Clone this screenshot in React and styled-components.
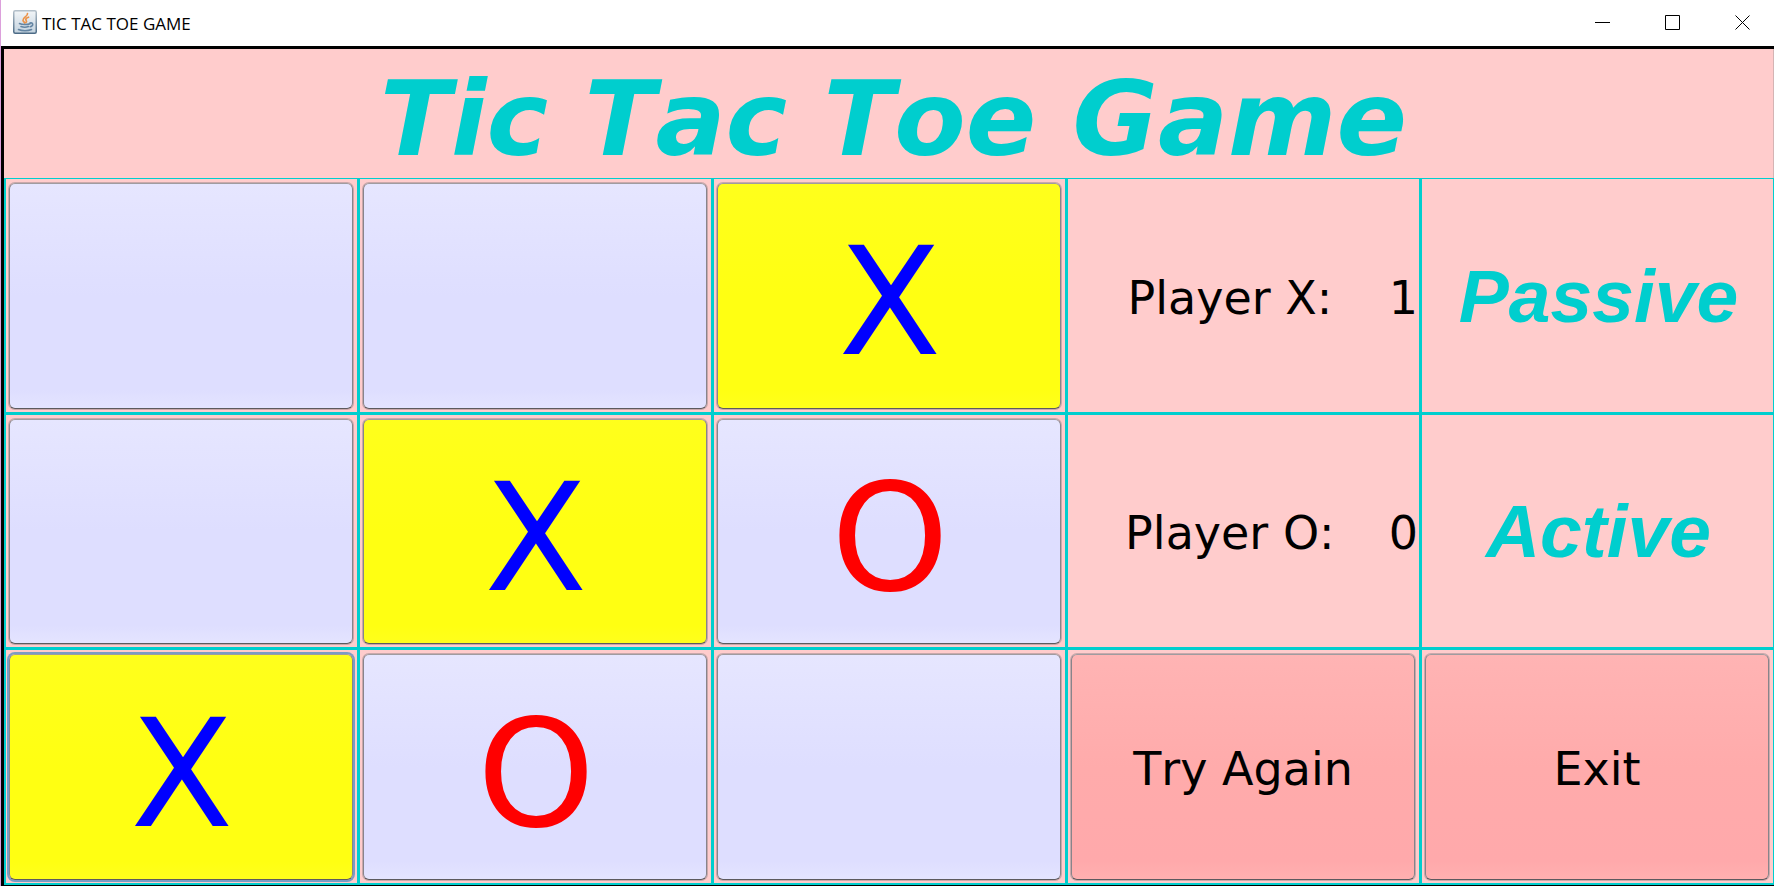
import React, { useState } from "react";
import styled, { createGlobalStyle, css } from "styled-components";

const teal = "#00cece";
const pink = "#ffcccc";
const verdana = 'Verdana, "DejaVu Sans", sans-serif';

const GlobalStyle = createGlobalStyle`
  * { box-sizing: border-box; }
  body { margin: 0; background: ${pink}; }
`;

const Window = styled.div`
  display: flex;
  flex-direction: column;
  min-height: 100vh;
  border-left: 1px solid #dca0dc;
  background: #ffffff;
`;

const TitleBar = styled.header`
  display: flex;
  align-items: center;
  height: 46px;
  padding: 0 0 2px 12px;
  background: #ffffff;
`;

const AppIcon = styled.svg`
  width: 24px;
  height: 24px;
  margin-right: 5px;
`;

const WindowTitle = styled.span`
  flex: 1;
  font: 17px/24px "Segoe UI", "Open Sans", sans-serif;
  color: #000000;
  padding-top: 4px;
`;

const WindowControls = styled.div`
  display: flex;
  gap: 7px;
`;

const WindowControl = styled.button`
  display: flex;
  align-items: center;
  justify-content: center;
  width: 63px;
  height: 44px;
  padding: 0;
  border: 0;
  background: transparent;
`;

const Frame = styled.main`
  display: flex;
  flex: 1;
  flex-direction: column;
  border: solid #000000;
  border-width: 3px 0 1px 3px;
  background: ${pink};
`;

const Heading = styled.h1`
  margin: 0;
  padding: 12px 0 0 10px;
  border-right: 1px solid #d4b4b4;
  font: italic bold 104px/117px ${verdana};
  font-kerning: none;
  text-align: center;
  color: ${teal};
`;

const Board = styled.div`
  display: grid;
  flex: 1;
  grid-template-columns: repeat(5, minmax(0, 1fr));
  grid-template-rows: repeat(3, minmax(180px, 1fr));
`;

const Cell = styled.div`
  display: flex;
  padding: ${(p) => (p.$label ? "4px 1px 3px 3px" : "4px 4px 3px 3px")};
  border: solid ${teal};
  border-width: 1px 1px 2px 2px;
`;

const Button = styled.button`
  flex: 1;
  min-width: 0;
  padding: 0;
  border: 1px solid;
  border-color: #a09ca0 #88848a #5c5a5e;
  border-radius: 6px;
  font-family: ${verdana};
  font-kerning: none;
  box-shadow: 0 0 0 1px rgba(100, 100, 110, 0.35);
  outline: none;
`;

const Square = styled(Button)`
  padding: 14px 0 0 2px;
  font-size: 150px;
  line-height: 175px;
  color: ${(p) => (p.$mark === "X" ? "#0000ff" : "#ff0000")};
  background: ${(p) =>
    p.$won
      ? "linear-gradient(#ffff1c, #ffff12 50%, #ffff12 92%, #ffff1c)"
      : "linear-gradient(#e6e6ff, #dedeff 50%, #dedeff 92%, #e4e4ff)"};
  ${(p) =>
    p.$focused &&
    css`
      box-shadow: 0 0 0 2px #7b9cc4;
    `}
`;

const ActionButton = styled(Button)`
  padding-top: 4px;
  font-size: 46px;
  line-height: 54px;
  color: #000000;
  background: linear-gradient(#ffb4b4, #ffabab 50%, #ffa9ab 92%, #ffb0b0);
`;

const Score = styled.div`
  display: flex;
  flex: 1;
  align-items: center;
  padding-top: 4px;
  font: 46px/54px ${verdana};
  font-kerning: none;
  color: #000000;
`;

const ScoreLabel = styled.span`
  flex: 1;
  text-align: center;
  white-space: nowrap;
`;

const Status = styled.div`
  display: flex;
  flex: 1;
  align-items: center;
  justify-content: center;
  font: italic bold 75px/86px "Liberation Sans", Arial, sans-serif;
  color: ${teal};
`;

const JavaIcon = () => (
  <AppIcon viewBox="0 0 24 24" aria-hidden="true">
    <defs>
      <linearGradient id="tile" x1="0" y1="0" x2="0" y2="1">
        <stop offset="0" stopColor="#f2f5f8" />
        <stop offset="1" stopColor="#c3d2de" />
      </linearGradient>
      <linearGradient id="edge" x1="0" y1="0" x2="0" y2="1">
        <stop offset="0" stopColor="#b4c0ca" />
        <stop offset="1" stopColor="#4c6b86" />
      </linearGradient>
    </defs>
    <rect x="0.75" y="0.75" width="22.5" height="22.5" rx="1.5" fill="url(#tile)" stroke="url(#edge)" strokeWidth="1.5" />
    <path d="M14.5 3.5c.5 3-5 3.800-4.500 6.800.2 1.200 1.300 1.700 1.700 2.700M15.500 7.200c-2.500.8-3.300 2-2.300 3.200.6.800.4 1.500-.2 2.100" fill="none" stroke="#ec9248" strokeWidth="1.700" strokeLinecap="round" />
    <path d="M6.500 13.500c2.500 1.300 8 1.300 10.500.2M8 16.500c2 .8 5.500.8 7.500 0M5.500 19.500c3.500 1.600 9.500 1.600 13 0M17 13c3-.8 4 2.500.3 3.700" fill="none" stroke="#6485a3" strokeWidth="1.600" strokeLinecap="round" />
  </AppIcon>
);

const controlIcons = {
  Minimize: <path d="M0 7.500h15" />,
  Maximize: <path d="M.5.5h14v14H.5z" />,
  Close: <path d="M.5.5l14 14M14.500.5l-14 14" />,
};

const emptyBoard = Array(9).fill("");
const lines = [
  [0, 1, 2], [3, 4, 5], [6, 7, 8],
  [0, 3, 6], [1, 4, 7], [2, 5, 8],
  [0, 4, 8], [2, 4, 6],
];

const findLine = (b) => lines.find(([i, j, k]) => b[i] && b[i] === b[j] && b[i] === b[k]);

export default function App() {
  const [board, setBoard] = useState(["", "", "X", "", "X", "O", "X", "O", ""]);
  const [turn, setTurn] = useState("O");
  const [last, setLast] = useState(6);
  const [scores, setScores] = useState({ X: 1, O: 0 });
  const winning = findLine(board) || [];

  const play = (index) => {
    if (board[index] || winning.length) return;
    const next = board.map((mark, i) => (i === index ? turn : mark));
    setBoard(next);
    setLast(index);
    if (findLine(next)) setScores({ ...scores, [turn]: scores[turn] + 1 });
    setTurn(turn === "X" ? "O" : "X");
  };

  const restart = () => {
    setBoard(emptyBoard);
    setLast(-1);
  };

  const renderSquares = (row) =>
    [0, 1, 2].map((column) => {
      const index = row * 3 + column;
      return (
        <Cell key={index}>
          <Square
            type="button"
            aria-label={`Row ${row + 1}, column ${column + 1} ${board[index]}`}
            $mark={board[index]}
            $won={winning.includes(index)}
            $focused={last === index}
            onClick={() => play(index)}
          >
            {board[index]}
          </Square>
        </Cell>
      );
    });

  return (
    <>
      <GlobalStyle />
      <Window>
        <TitleBar>
          <JavaIcon />
          <WindowTitle>TIC TAC TOE GAME</WindowTitle>
          <WindowControls>
            {Object.entries(controlIcons).map(([name, icon]) => (
              <WindowControl key={name} type="button" aria-label={name}>
                <svg width="15" height="15" viewBox="0 0 15 15" fill="none" stroke="#000000">
                  {icon}
                </svg>
              </WindowControl>
            ))}
          </WindowControls>
        </TitleBar>
        <Frame>
          <Heading>Tic Tac Toe Game</Heading>
          <Board>
            {["X", "O"].map((player, row) => (
              <React.Fragment key={player}>
                {renderSquares(row)}
                <Cell $label>
                  <Score>
                    <ScoreLabel>Player {player}:</ScoreLabel>
                    <span>{scores[player]}</span>
                  </Score>
                </Cell>
                <Cell $label>
                  <Status>{turn === player ? "Active" : "Passive"}</Status>
                </Cell>
              </React.Fragment>
            ))}
            {renderSquares(2)}
            <Cell>
              <ActionButton type="button" onClick={restart}>Try Again</ActionButton>
            </Cell>
            <Cell>
              <ActionButton type="button">Exit</ActionButton>
            </Cell>
          </Board>
        </Frame>
      </Window>
    </>
  );
}
